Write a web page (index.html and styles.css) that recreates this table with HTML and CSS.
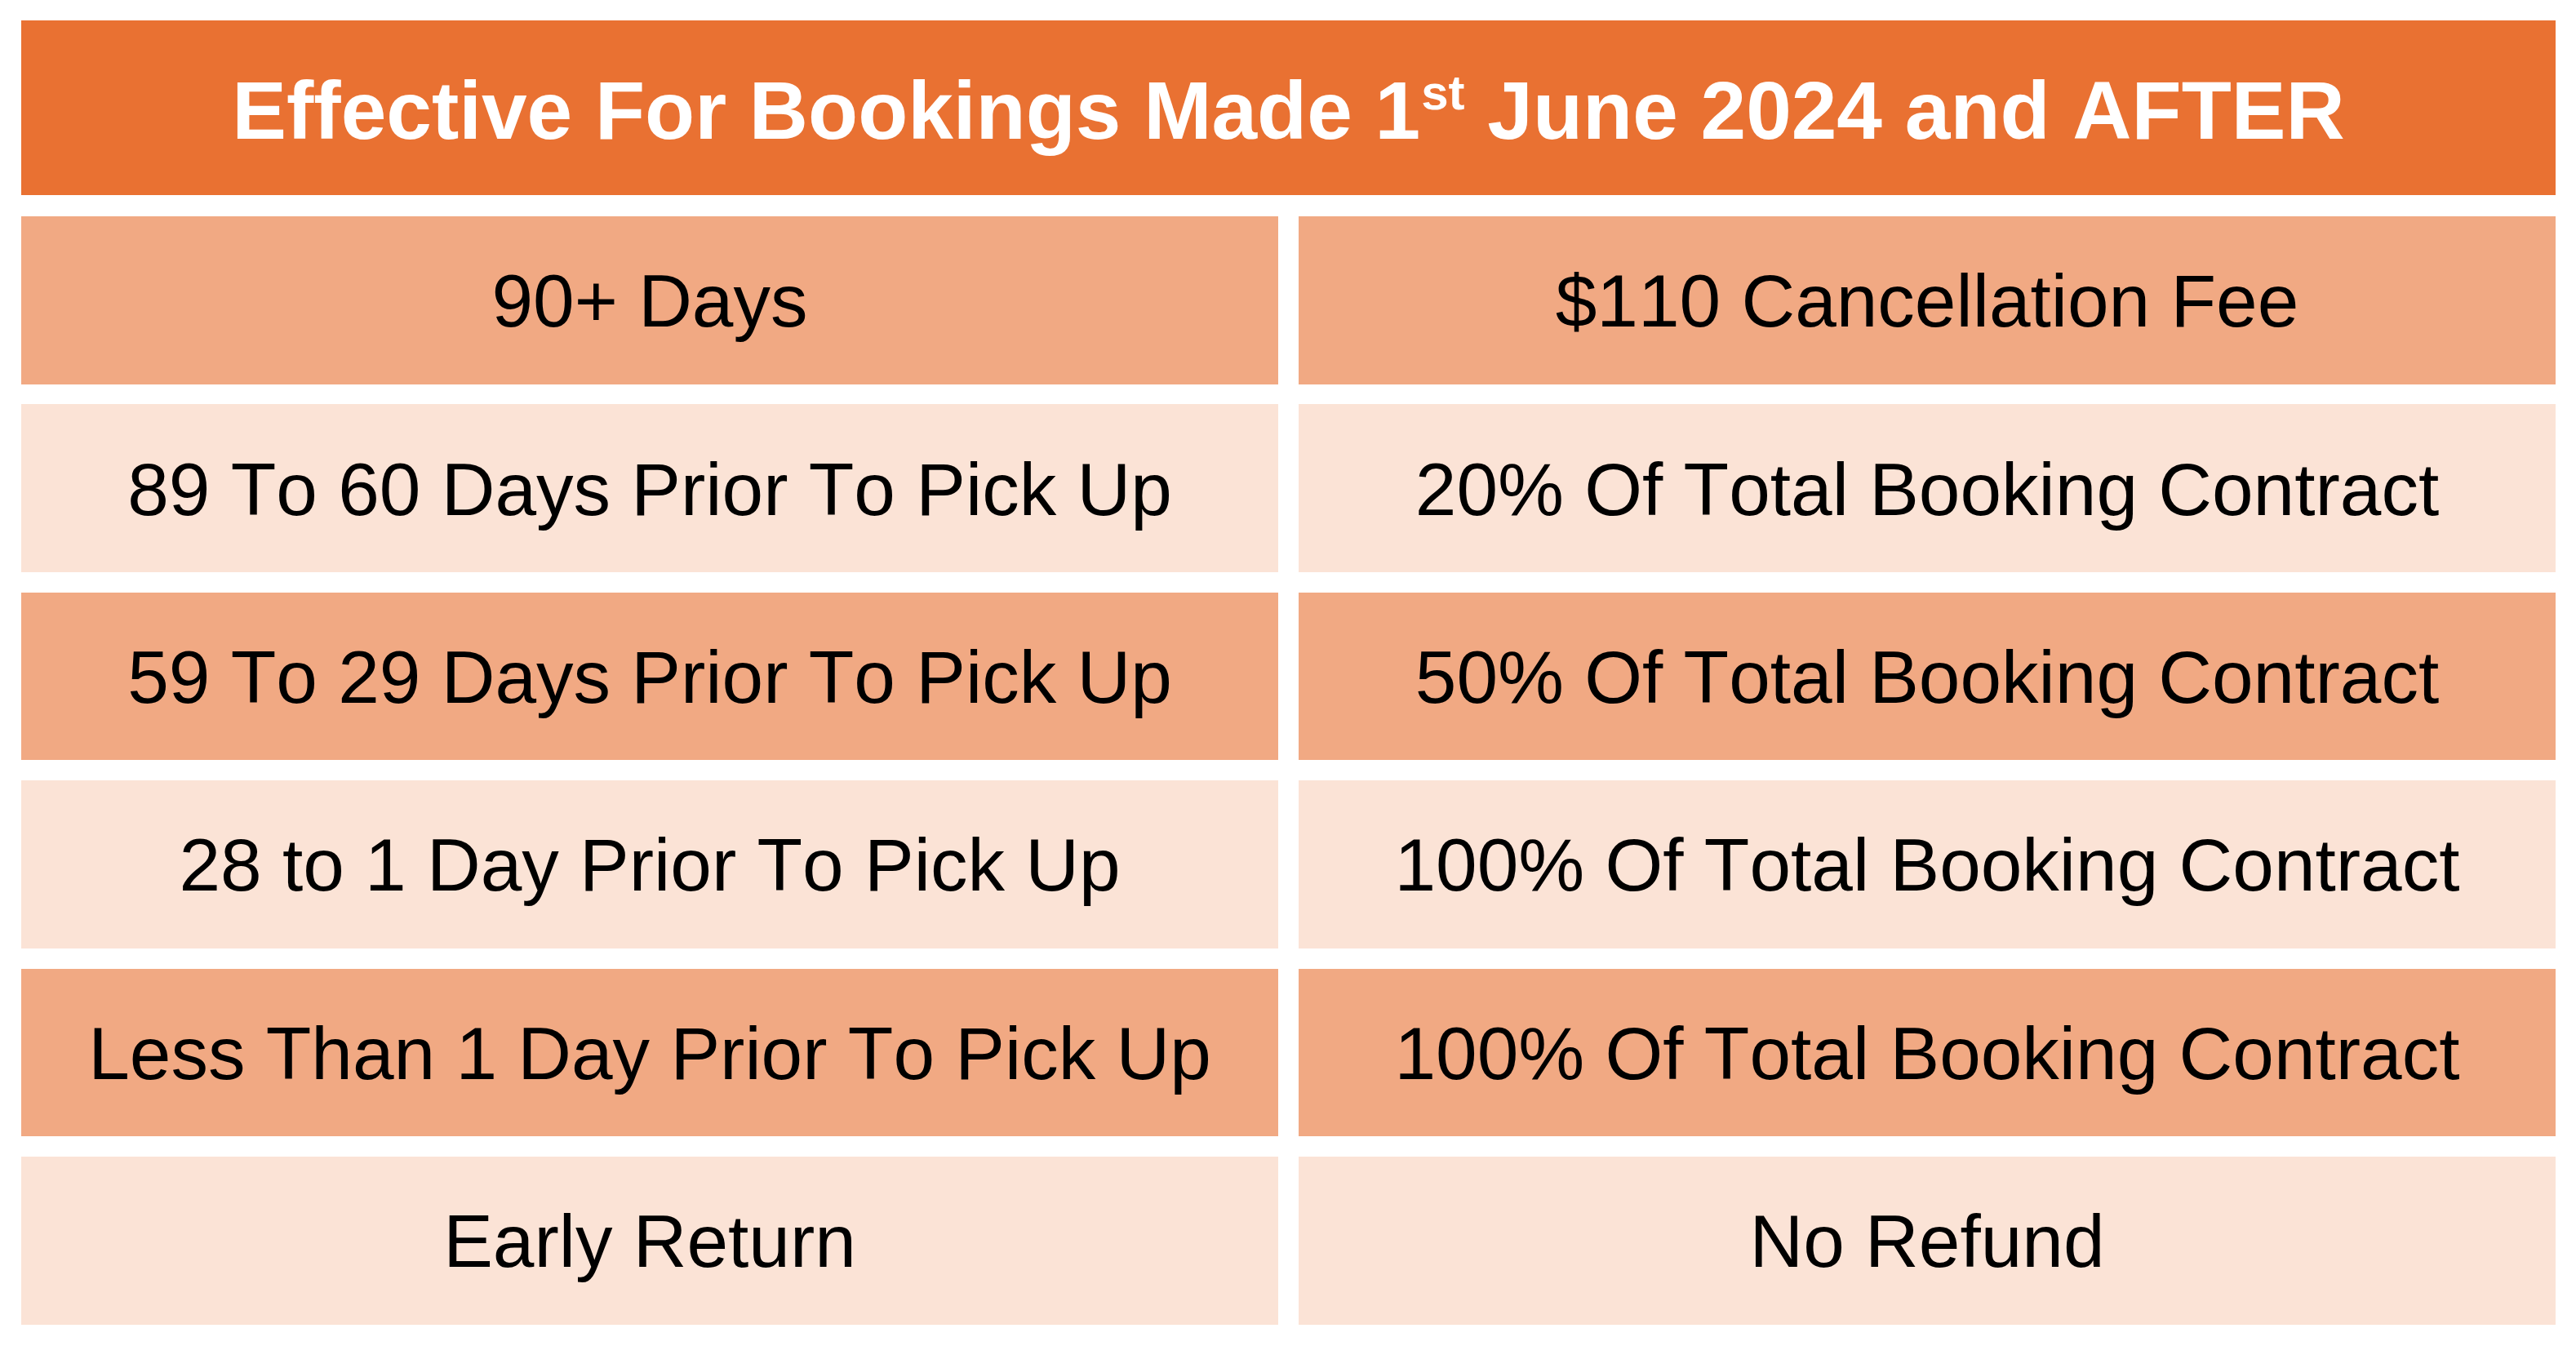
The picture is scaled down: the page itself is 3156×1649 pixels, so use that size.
FILE: index.html
```html
<!DOCTYPE html>
<html lang="en">
<head>
<meta charset="utf-8">
<title>Cancellation Policy</title>
<link rel="stylesheet" href="styles.css">
</head>
<body>
<main class="policy">
  <h1 class="policy-header"><span class="header-text">Effective For Bookings Made 1<sup class="ord">st</sup> June 2024 and AFTER</span></h1>
  <div class="policy-grid">
    <div class="cell dark"><span>90+ Days</span></div>
    <div class="cell dark"><span>$110 Cancellation Fee</span></div>
    <div class="cell light"><span>89 To 60 Days Prior To Pick Up</span></div>
    <div class="cell light"><span>20% Of Total Booking Contract</span></div>
    <div class="cell dark"><span>59 To 29 Days Prior To Pick Up</span></div>
    <div class="cell dark"><span>50% Of Total Booking Contract</span></div>
    <div class="cell light"><span>28 to 1 Day Prior To Pick Up</span></div>
    <div class="cell light"><span>100% Of Total Booking Contract</span></div>
    <div class="cell dark"><span>Less Than 1 Day Prior To Pick Up</span></div>
    <div class="cell dark"><span>100% Of Total Booking Contract</span></div>
    <div class="cell light"><span>Early Return</span></div>
    <div class="cell light"><span>No Refund</span></div>
  </div>
</main>
</body>
</html>
```
FILE: styles.css
```css
html, body {
  margin: 0;
  padding: 0;
  background: #ffffff;
}

.policy {
  width: 3105px;
  padding: 25px 25px 0 26px;
  display: flex;
  flex-direction: column;
  gap: 26px;
  font-family: "Liberation Sans", Arial, sans-serif;
  font-kerning: none;
}

.policy-header {
  margin: 0;
  height: 214px;
  box-sizing: border-box;
  padding-top: 5px;
  background: #E97132;
  color: #ffffff;
  font-size: 100px;
  font-weight: 700;
  display: flex;
  align-items: center;
  justify-content: center;
  line-height: 1;
  white-space: nowrap;
}

.header-text {
  display: block;
}

.ord {
  font-size: 60px;
  vertical-align: 36px;
  line-height: 0;
  margin-left: 1px;
}

.policy-grid {
  display: grid;
  grid-template-columns: 1540px 1540px;
  grid-auto-rows: 205.6px;
  column-gap: 25px;
  row-gap: 24.8px;
}

.cell {
  box-sizing: border-box;
  padding-top: 2px;
  display: flex;
  align-items: center;
  justify-content: center;
  font-size: 91px;
  color: #000000;
  white-space: nowrap;
  line-height: 1;
}

.dark {
  background: #F1A983;
}

.light {
  background: #FBE3D6;
}
```
